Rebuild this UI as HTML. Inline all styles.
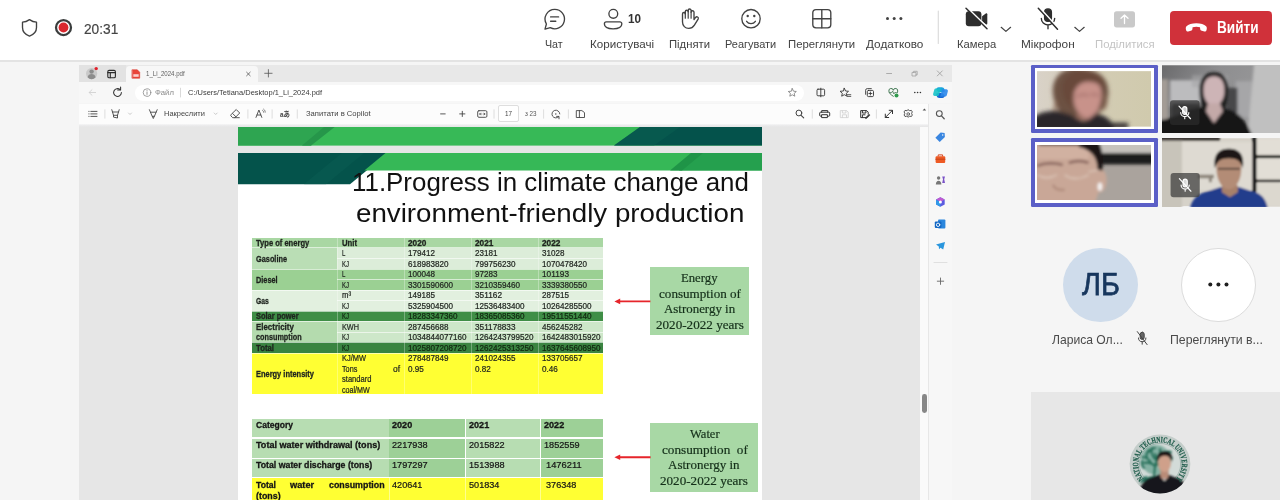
<!DOCTYPE html>
<html lang="uk"><head><meta charset="utf-8"><title>Teams meeting</title>
<style>
html,body{margin:0;padding:0}
body{width:1280px;height:500px;overflow:hidden;background:#f5f5f5;font-family:"Liberation Sans",sans-serif}
#app{position:relative;width:1280px;height:500px;overflow:hidden}
#app>div,#app>svg,#app>.t{position:absolute}
#app>svg{overflow:visible;display:block}
.t{white-space:nowrap;line-height:1;transform-origin:0 50%;display:block}
</style></head>
<body><div id="app">
<div style="left:0px;top:0px;width:1280px;height:60px;background:#fff;"></div>
<div style="left:0px;top:60px;width:1280px;height:1.5px;background:#e3e3e3;"></div>
<span class="t" style='left:83.7px;top:20.88px;font-size:15.5px;color:#444;transform:scaleX(0.884);-webkit-text-stroke:.2px #444;'>20:31</span>
<span class="t" style='left:545.3px;top:38.30px;font-size:11.7px;color:#424242;transform:scaleX(0.913);'>Чат</span>
<span class="t" style='left:590.2px;top:38.30px;font-size:11.7px;color:#424242;transform:scaleX(0.994);'>Користувачі</span>
<span class="t" style='left:668.8px;top:38.30px;font-size:11.7px;color:#424242;transform:scaleX(0.965);'>Підняти</span>
<span class="t" style='left:724.8px;top:38.30px;font-size:11.7px;color:#424242;transform:scaleX(0.938);'>Реагувати</span>
<span class="t" style='left:787.8px;top:38.30px;font-size:11.7px;color:#424242;transform:scaleX(0.970);'>Переглянути</span>
<span class="t" style='left:865.6px;top:38.30px;font-size:11.7px;color:#424242;transform:scaleX(1.006);'>Додатково</span>
<span class="t" style='left:956.8px;top:38.30px;font-size:11.7px;color:#424242;transform:scaleX(0.960);'>Камера</span>
<span class="t" style='left:1021.3px;top:38.30px;font-size:11.7px;color:#424242;transform:scaleX(1.013);'>Мікрофон</span>
<span class="t" style='left:1094.6px;top:38.30px;font-size:11.7px;color:#c4c4c4;transform:scaleX(0.971);'>Поділитися</span>
<span class="t" style='left:627.8px;top:12.96px;font-size:12.8px;font-weight:700;color:#333;transform:scaleX(0.913);'>10</span>
<div style="left:1170.3px;top:10.9px;width:101.5px;height:33.8px;background:#d0313a;border-radius:4px;"></div>
<span class="t" style='left:1216.6px;top:20.25px;font-size:16.6px;font-weight:700;color:#fff;transform:scaleX(0.820);'>Вийти</span>
<svg style="left:0;top:0" width="1280" height="60" viewBox="0 0 1280 60" fill="none" stroke="#424242" stroke-width="1.35" stroke-linecap="round" stroke-linejoin="round">
<!-- shield -->
<path d="M29.5 19.6c2.3 1.7 4.6 2.5 7 2.6v5.3c0 4.200-2.600 7-7 8.600c-4.400-1.600-7-4.400-7-8.600v-5.300c2.400-.1 4.700-.9 7-2.600z"/>
<!-- record -->
<circle cx="63.500" cy="27.500" r="7.500" stroke="#3a3d3d" stroke-width="2.250"/>
<circle cx="63.500" cy="27.500" r="4.900" fill="#d9272e" stroke="none"/>
<!-- chat -->
<path d="M554.800 9.400a9.700 9.700 0 1 1-4.500 18.300l-5.300 1.400 1.400-5.100a9.700 9.700 0 0 1 8.400-14.600z"/>
<path d="M550.600 16.900h8M550.600 21.200h5.200"/>
<!-- people -->
<circle cx="613.300" cy="13.800" r="4.400"/>
<path d="M606.300 21.800h13.600a1.900 1.900 0 0 1 1.900 1.900v.3c0 2.800-3.300 4.800-8.700 4.800s-8.700-2-8.700-4.800v-.3a1.900 1.900 0 0 1 1.900-1.900z"/>
<!-- hand -->
<g transform="translate(1379.200 0) scale(-1 1)">
<path d="M685.200 19.500v-7.300a1.450 1.450 0 0 1 2.900 0v-1.700a1.450 1.450 0 0 1 2.900 0v1.200a1.450 1.450 0 0 1 2.900 0v2.200a1.400 1.400 0 0 1 2.800 0v8.200c0 3.700-2.700 6.300-6.300 6.300c-2.600 0-4.300-1.100-5.600-3.200l-3.700-6.100c-.5-.9-.2-1.700.5-2.100c.8-.4 1.600-.1 2.200.6z"/>
<path d="M688.100 12.200v6M691 10.500v7.700M693.900 11.700v6.500" stroke-width="1.200"/>
</g>
<!-- emoji -->
<circle cx="751" cy="18.700" r="9.200"/>
<circle cx="747.700" cy="16" r="1.200" fill="#424242" stroke="none"/><circle cx="754.300" cy="16" r="1.200" fill="#424242" stroke="none"/>
<path d="M746.600 21.300c1.100 1.600 2.600 2.300 4.400 2.300s3.300-.7 4.400-2.300"/>
<!-- grid -->
<rect x="812.800" y="9.600" width="18" height="18.200" rx="3.200"/>
<path d="M821.800 9.600v18.200M812.800 18.700h18"/>
<!-- more -->
<g fill="#424242" stroke="none"><circle cx="887.500" cy="18.600" r="1.500"/><circle cx="894.200" cy="18.600" r="1.500"/><circle cx="900.900" cy="18.600" r="1.500"/></g>
<!-- divider -->
<path d="M938.300 11v32.500" stroke="#dcdcdc" stroke-width="1.200"/>
<!-- camera off -->
<g fill="#2e2e2e" stroke="none"><rect x="965.800" y="11.200" width="15.600" height="15" rx="3"/><path d="M982.100 16.300l3.700-2.900c.7-.5 1.500-.1 1.500.8v9.200c0 .9-.8 1.300-1.500.8l-3.700-2.900z"/></g>
<path d="M967.300 7.800l20.600 20.200" stroke="#fff" stroke-width="1.800"/>
<path d="M966 8.200l21 20.600" stroke="#2e2e2e" stroke-width="1.500"/>
<!-- chevrons -->
<path d="M1001.200 27.300l4.700 4.100 4.700-4.100M1074.800 27.300l4.700 4.100 4.700-4.100" stroke-width="1.200"/>
<!-- mic off -->
<rect x="1044.600" y="8.900" width="6.800" height="12.400" rx="3.400" stroke="#2e2e2e" fill="#2e2e2e"/>
<path d="M1041.300 18.300a6.700 6.700 0 0 0 13.400 0M1048 25.200v3.600" stroke="#2e2e2e"/>
<path d="M1039.700 7.900l18.600 20.400" stroke="#fff" stroke-width="1.800"/>
<path d="M1038.300 8.300l19.200 20.900" stroke="#2e2e2e" stroke-width="1.500"/>
<!-- share (disabled) -->
<rect x="1114" y="11.200" width="21" height="16.200" rx="2.600" fill="#c9c9c9" stroke="none"/>
<path d="M1124.500 23.500v-8.200M1121 18.300l3.500-3.300 3.500 3.300" stroke="#fff" stroke-width="1.300"/>
<!-- hang up phone -->
<path d="M1196.300 23.300c4.300 0 8 1.100 9.800 3 .9.900.9 2.400.4 3.900-.3.900-1.200 1.400-2.100 1.200l-2.600-.6c-.9-.2-1.500-.9-1.600-1.800l-.2-1.700c-2.400-.8-5-.8-7.400 0l-.2 1.700c-.1.900-.7 1.600-1.600 1.800l-2.600.6c-.9.200-1.800-.3-2.100-1.200-.5-1.500-.5-3 .4-3.900 1.800-1.900 5.500-3 9.800-3z" fill="#fff" stroke="none"/>
</svg>
<div style="left:0px;top:61.5px;width:1280px;height:438.5px;background:#f5f5f5;"></div>
<div style="left:78.5px;top:64.5px;width:873.5px;height:17.1px;background:#e8e8e8;"></div>
<div style="left:78.5px;top:64.5px;width:47.0px;height:17.1px;background:#e2e2e2;"></div>
<div style="left:125.5px;top:66px;width:132.1px;height:15.8px;background:#f7f7f7;border-radius:4px 4px 0 0;"></div>
<div style="left:78.5px;top:81.6px;width:873.5px;height:21.9px;background:#f7f7f7;"></div>
<div style="left:135px;top:84.6px;width:669px;height:16.0px;background:#fff;border-radius:8px;"></div>
<div style="left:78.5px;top:103.5px;width:849.5px;height:21.1px;background:#fcfcfc;"></div>
<div style="left:78.5px;top:124.6px;width:841.5px;height:375.4px;background:#e6e6e6;"></div>
<div style="left:920px;top:124.6px;width:8px;height:375.4px;background:#fafafa;"></div>
<div style="left:928px;top:103.5px;width:24px;height:396.5px;background:#f7f7f7;border-left:1px solid #e7e7e7;box-sizing:border-box;"></div>
<div style="left:78.5px;top:124.2px;width:849.5px;height:2.8px;background:linear-gradient(#f6f6f7,#ececed 45%,#e6e6e6);"></div>
<span class="t" style='left:146.3px;top:70.21px;font-size:7.2px;color:#5e5e5e;transform:scaleX(0.849);'>1_Li_2024.pdf</span>
<span class="t" style='left:155.3px;top:89.14px;font-size:7.4px;color:#8a8a8a;transform:scaleX(1.040);'>Файл</span>
<span class="t" style='left:187.6px;top:88.91px;font-size:7.9px;color:#3a3a3a;transform:scaleX(0.946);'>C:/Users/Tetiana/Desktop/1_Li_2024.pdf</span>
<span class="t" style='left:164.3px;top:110.11px;font-size:7.9px;color:#444;transform:scaleX(0.945);'>Накреслити</span>
<span class="t" style='left:306.2px;top:110.11px;font-size:7.9px;color:#444;transform:scaleX(0.968);'>Запитати в Copilot</span>
<div style="left:498.2px;top:104.8px;width:21.2px;height:17.0px;background:#fff;border:1px solid #dedede;box-sizing:border-box;border-radius:2px;"></div>
<span class="t" style='left:505.2px;top:110.64px;font-size:6.8px;color:#444;transform:scaleX(0.926);'>17</span>
<span class="t" style='left:524.6px;top:110.98px;font-size:6.4px;color:#555;transform:scaleX(0.981);'>з 23</span>
<svg style="left:0;top:60px" width="1280" height="70" viewBox="0 60 1280 70" fill="none" stroke="#4a4a4a" stroke-width="0.9" stroke-linecap="round" stroke-linejoin="round">
<!-- profile -->
<circle cx="91.600" cy="73.600" r="5.600" fill="#c9c9c9" stroke="none"/>
<circle cx="91.600" cy="71.600" r="2.200" fill="#8c8c8c" stroke="none"/>
<path d="M87.600 77.200c.5-2.200 2-3.200 4-3.200s3.500 1 4 3.200c-1 1.300-2.400 2-4 2s-3-.7-4-2z" fill="#8c8c8c" stroke="none"/>
<circle cx="96.200" cy="68.600" r="1.700" fill="#e0202b" stroke="none"/>
<!-- tab actions -->
<rect x="107.800" y="70.400" width="7.600" height="7.400" rx="1.300" stroke="#2b2b2b" stroke-width="1.100"/>
<path d="M107.800 72.600h7.600M110.300 72.600v5.200" stroke="#2b2b2b" stroke-width="1.100"/>
<!-- pdf favicon -->
<path d="M132.300 69.800h5l2.400 2.400v6h-7.400z" fill="#e9443a" stroke="#d8362c" stroke-width=".6"/>
<path d="M133.300 74.200h5.400v2.600h-5.400z" fill="#fff" stroke="none" opacity=".75"/>
<!-- tab close, new tab -->
<path d="M246.600 72.200l3.600 3.600M250.200 72.200l-3.600 3.600" stroke="#555" stroke-width=".8"/>
<path d="M268.400 69.600v7.400M264.700 73.300h7.400" stroke="#555" stroke-width=".8"/>
<!-- window controls -->
<path d="M886.600 73.500h5" stroke="#9a9a9a" stroke-width=".8"/>
<path d="M912.400 72.400h3.600v3.600h-3.600zM913.600 72.400v-1.100h3.600v3.600h-1.200" stroke="#9a9a9a" stroke-width=".7"/>
<path d="M937.300 70.900l5 5M942.300 70.900l-5 5" stroke="#9a9a9a" stroke-width=".8"/>
<!-- back (disabled) -->
<path d="M95.600 92.500h-6.400M92 89.700l-2.900 2.800 2.900 2.800" stroke="#d0d0d0"/>
<!-- reload -->
<path d="M121.400 92.600a3.900 3.900 0 1 1-1.300-3" stroke="#333" stroke-width="1.050"/>
<path d="M120.600 87v2.900h-2.900" stroke="#333" stroke-width="1.050"/>
<!-- info -->
<circle cx="147" cy="92.600" r="3.800" stroke="#8a8a8a" stroke-width=".8"/>
<path d="M147 92v2.400M147 90.600v.1" stroke="#8a8a8a" stroke-width=".9"/>
<path d="M180.500 88.200v8.800" stroke="#cfcfcf" stroke-width=".8"/>
<!-- star -->
<path d="M792.300 88.600l1.200 2.600 2.800.3-2.100 1.900.6 2.800-2.500-1.400-2.500 1.400.6-2.800-2.100-1.900 2.800-.3z" stroke="#777" stroke-width=".8"/>
<!-- split screen -->
<rect x="817" y="89.200" width="7.600" height="6.600" rx="1" stroke="#333"/><path d="M820.800 88.200v8.600" stroke="#333"/>
<!-- favourites -->
<path d="M844.300 88.300l1.300 2.700 2.900.3-2.200 2 .7 2.900-2.700-1.500-2.600 1.500.6-2.900-2.200-2 3-.3z" stroke="#333"/>
<path d="M847.400 94.700h3.400M847.400 96.400h3.400" stroke="#333" stroke-width=".8"/>
<!-- collections -->
<rect x="867.300" y="90.400" width="6.200" height="6.200" rx="1.200" stroke="#333"/>
<path d="M865.600 94.300v-4a1.700 1.700 0 0 1 1.700-1.700h4M870.400 92v3M868.900 93.500h3" stroke="#333" stroke-width=".85"/>
<!-- browser essentials -->
<path d="M893.300 96.300c-2.700-1.700-4.400-3.300-4.400-5.200a2.200 2.200 0 0 1 4.400-.8a2.200 2.200 0 0 1 4.400.8c0 .6-.2 1.200-.5 1.700" stroke="#2f6b42"/>
<path d="M889.600 92.600h2.100l.9-1.500 1.300 2.800.8-1.300h1.600" stroke="#2f6b42" stroke-width=".75"/>
<circle cx="896.500" cy="95.500" r="2" fill="#2f9a4c" stroke="none"/>
<!-- ... -->
<g fill="#333" stroke="none"><circle cx="914.800" cy="92.500" r=".8"/><circle cx="917.600" cy="92.500" r=".8"/><circle cx="920.400" cy="92.500" r=".8"/></g>
<!-- copilot -->
<path d="M938.600 87.200h3.200c1.300 0 2.200.7 2.500 1.900l.6 2.300-3.100 1-3.600-.4-2.100-2.600c.5-1.400 1.300-2.200 2.500-2.200z" fill="#1aa3dd" stroke="none"/>
<path d="M942.400 98h-3.200c-1.300 0-2.200-.7-2.500-1.900l-.6-2.300 3.100-1 3.600.4 2.100 2.600c-.5 1.400-1.300 2.200-2.500 2.200z" fill="#1768d4" stroke="none"/>
<path d="M936 88.600c-.9 0-1.500.5-1.800 1.400l-1 3.600c-.4 1.400.3 2.400 1.600 2.400h2.600c.8 0 1.300-.4 1.600-1.300l1.500-5c.1-.4.300-.8.700-1.100z" fill="#17c2c8" stroke="none" opacity=".9"/>
<path d="M945 96.600c.9 0 1.500-.5 1.800-1.400l1-3.600c.4-1.400-.3-2.400-1.600-2.400h-2.600c-.8 0-1.300.4-1.600 1.300l-1.500 5c-.1.400-.3.800-.7 1.100z" fill="#2a86ea" stroke="none" opacity=".9"/>

<!-- ===== pdf toolbar ===== -->
<path d="M88.800 111.400h.3M90.800 111.400h6.200M88.800 113.900h.3M90.800 113.900h6.200M88.800 116.400h.3M90.800 116.400h6.200" stroke="#444" stroke-width=".9"/>
<path d="M104.900 109.800v8.400M247.900 109.800v8.400M272.100 109.800v8.400M297.300 109.800v8.400M494 109.800v8.400M543.600 109.800v8.400M568.400 109.800v8.400M812.300 109.800v8.400M876.400 109.800v8.400" stroke="#d6d6d6" stroke-width=".8"/>
<!-- highlight -->
<path d="M111.800 109.700l1.700 5.600h4l1.700-5.600M113.500 115.300v1.800l4 .9v-2.700M112.400 112h6.200" stroke="#444"/>
<path d="M128.500 113l1.500 1.500 1.500-1.500M214.200 113l1.500 1.500 1.500-1.500" stroke="#bdbdbd" stroke-width=".8"/>
<!-- draw -->
<path d="M149.400 109.700l2.800 6.600h2.200l2.800-6.600M150.600 112.200h5.400M152.300 116.300l1 2.200 1-2.200" stroke="#444"/>
<!-- eraser -->
<path d="M236.500 109.800l3.200 3.200-4.600 4.700h-2.400l-1.700-1.700c-.4-.4-.4-1 0-1.400zM232.700 113.600l3.200 3.200M235 117.700h4.300" stroke="#444"/>
<!-- read aloud A -->
<path d="M256 117.400l2.900-7.400 2.900 7.400M257 115h3.800" stroke="#444"/>
<path d="M262.600 110.400c.7.500 1 1.100 1 1.800M263.700 109.200c1 .8 1.500 1.800 1.500 3" stroke="#444" stroke-width=".7"/>
<!-- fit / zoom -->
<path d="M440.600 113.900h4.600M459.700 113.900h5.200M462.300 111.300v5.200" stroke="#444"/>
<rect x="477.700" y="110.700" width="9.200" height="6.600" rx="1.200" stroke="#444"/>
<path d="M479.600 114h1.900M483.100 114h1.900M480.500 113.100l-.9.900.9.900M484.100 113.100l.9.900-.9.900" stroke="#444" stroke-width=".7"/>
<!-- rotate -->
<g transform="rotate(180 555.800 114)"><path d="M552.800 111.300a3.900 3.900 0 1 1-1 2.800" stroke="#444"/><path d="M552.600 109.200v2.400h2.400" stroke="#444"/></g><circle cx="555.800" cy="114" r=".7" fill="#444" stroke="none"/>
<!-- page view -->
<path d="M576.700 110.600h5.200l2.600 2v4.900h-7.800zM579.400 110.600v6.900" stroke="#444"/>
<!-- search -->
<circle cx="798.900" cy="113" r="2.900" stroke="#444" stroke-width="1"/><path d="M801.100 115.300l2.600 2.600" stroke="#444" stroke-width="1.100"/>
<!-- print -->
<path d="M821.700 112.200v-1.600h6v1.600M821.600 116.200h-1a.9.900 0 0 1-.9-.9v-2.200a.9.900 0 0 1 .9-.9h8.200a.9.900 0 0 1 .9.900v2.200a.9.900 0 0 1-.9.900h-1M822 114.700h5.400v2.900h-5.400z" stroke="#333" stroke-width="1"/>
<!-- save (disabled) -->
<path d="M840.700 110.600h6l1.500 1.500v5.500h-7.500zM842.400 110.600v2.400h3.500v-2.400M842.400 117.600v-2.800h4.100v2.800" stroke="#d4d4d4"/>
<!-- save as -->
<path d="M866 117.600h-5.300v-7h6l1.500 1.500v2M862.400 110.600v2.400h3.500v-2.400M862.400 117.600v-2.800h2.600" stroke="#333" stroke-width="1"/>
<path d="M868.900 114.400l-3 3-.4 1.200 1.300-.3 3-3z" fill="#333" stroke="#333" stroke-width=".6"/>
<!-- expand -->
<path d="M885.400 117.400l7-7M889.200 110.300h3.300v3.300M885.300 114.100v3.400h3.400" stroke="#333" stroke-width="1"/>
<!-- gear -->
<path d="M908.200 109.800l1.500.9 1.700-.3.900 1.500-.7 1.500.7 1.600-.9 1.500-1.700-.3-1.500.9-1.500-.9-1.700.3-.9-1.500.7-1.600-.7-1.500.9-1.500 1.700.3z" stroke="#444"/><circle cx="908.200" cy="114" r="1.300" stroke="#444" stroke-width=".8"/>
<path d="M922.600 110.600l1.800-2 1.800 2z" fill="#555" stroke="none"/>
</svg>
<span class="t" style='left:280px;top:110.57px;font-size:7.6px;font-weight:700;color:#444;transform:scaleX(0.845);font-family:"Liberation Sans","Noto Sans CJK JP",sans-serif;'>aあ</span>
<svg style="left:928px;top:104px" width="24" height="200" viewBox="928 104 24 200" fill="none" stroke-linecap="round" stroke-linejoin="round">
<circle cx="939.300" cy="113.600" r="2.900" stroke="#555" stroke-width="1.100"/><path d="M941.500 115.900l2.700 2.800" stroke="#555" stroke-width="1.300"/>
<path d="M940.600 132.600l4 .3.300 4-5.200 5.200-4.300-4.300z" fill="#3a86e0"/><circle cx="942.700" cy="135" r=".7" fill="#fff"/>
<path d="M938.200 156.200v-1.300h4.400v1.300" stroke="#d4471f" stroke-width="1"/><rect x="935.600" y="156.200" width="9.600" height="6.800" rx="1" fill="#ee5a24"/><path d="M935.600 159.200h9.600" stroke="#b63a12" stroke-width=".7"/>
<circle cx="938.600" cy="178" r="1.700" fill="#777"/><path d="M935.800 184.600c.2-2.600 1.200-3.800 2.800-3.800s2.600 1.200 2.800 3.800z" fill="#777"/>
<path d="M942.200 176.600h2.800l-.8 2.600.8 3.800h-2.800l.8-3.800z" fill="#7a52c7"/>
<path d="M940.400 197.200l4.300 2.400v4.800l-4.300 2.400-4.300-2.400v-4.800z" fill="#5b5be0"/><path d="M940.400 197.200l4.300 2.400-4.300 2.400-4.300-2.400z" fill="#c05ad0"/><path d="M940.400 202v4.800l-4.300-2.400v-4.800z" fill="#2f9be8"/><circle cx="940.400" cy="202" r="1.500" fill="#fff"/>
<rect x="938" y="219.600" width="7.400" height="9" rx="1" fill="#2a86dd"/><rect x="934.800" y="221.600" width="6.600" height="6.400" rx="1" fill="#1267c4"/><circle cx="938.100" cy="224.800" r="1.700" stroke="#fff" stroke-width=".9"/>
<path d="M936 244.600l9-2.600-1.800 7.600-2.700-1.900-1.500 1.500-.2-2.600z" fill="#2a96dd"/>
<path d="M934 262.500h13" stroke="#dcdcdc" stroke-width=".9"/>
<path d="M940.500 278v6.400M937.300 281.200h6.400" stroke="#666" stroke-width=".9"/>
</svg>
<div style="left:922px;top:394.4px;width:4.8px;height:18.4px;background:#878787;border-radius:2.4px;"></div>
<svg style="left:238px;top:126.7px" width="524" height="18.6" viewBox="0 0 524 20.4" preserveAspectRatio="none">
<rect width="524" height="20.4" fill="#37b957"/>
<path d="M0 0h96.500l-23.500 20.400h-73z" fill="#2ea551"/>
<path d="M86 0h10.500l-23.500 20.400h-9z" fill="#26964a"/>
<path d="M402 0h122v20.400h-148z" fill="#04524b"/>
<path d="M402 0h40l-26 20.400h-40z" fill="#0a5f52" opacity=".5"/>
</svg>
<div style="left:238px;top:153.2px;width:524px;height:346.8px;background:#fff;"></div>
<svg style="left:238px;top:153.200px" width="524" height="32" viewBox="0 0 524 32" preserveAspectRatio="none">
<path d="M0 0h150l-38 31.200h-112z" fill="#04534b"/>
<path d="M104 0h22l-38 31.200h-22z" fill="#0a5f54" opacity=".45"/>
<path d="M147.500 0h376.500v17.400h-397.700z" fill="#36b857"/>
<path d="M462 0h62v17.400h-83z" fill="#25a04e"/>
<path d="M453 0h12l-21 17.400h-12z" fill="#1f9447"/>
</svg>
<span class="t" style='left:351.9px;top:169.50px;font-size:25.4px;color:#111;transform:scaleX(1.020);'>11.Progress in climate change and</span>
<span class="t" style='left:355.9px;top:200.50px;font-size:25.4px;color:#111;transform:scaleX(1.092);'>environment-friendly production</span>
<div style="left:251.8px;top:238.2px;width:351.6px;height:156.0px;background:#fff;"></div>
<div style="left:251.8px;top:238.2px;width:85.4px;height:9.6px;background:#a9d7a3;"></div>
<div style="left:337.2px;top:238.2px;width:67.4px;height:9.6px;background:#a9d7a3;"></div>
<div style="left:404.6px;top:238.2px;width:66.6px;height:9.6px;background:#a9d7a3;"></div>
<div style="left:471.2px;top:238.2px;width:66.8px;height:9.6px;background:#a9d7a3;"></div>
<div style="left:538px;top:238.2px;width:65.4px;height:9.6px;background:#a9d7a3;"></div>
<div style="left:251.8px;top:247.8px;width:85.4px;height:10.6px;background:#badeb5;"></div>
<div style="left:337.2px;top:247.8px;width:67.4px;height:10.6px;background:#dcedd9;"></div>
<div style="left:404.6px;top:247.8px;width:66.6px;height:10.6px;background:#dcedd9;"></div>
<div style="left:471.2px;top:247.8px;width:66.8px;height:10.6px;background:#dcedd9;"></div>
<div style="left:538px;top:247.8px;width:65.4px;height:10.6px;background:#dcedd9;"></div>
<div style="left:251.8px;top:258.4px;width:85.4px;height:10.5px;background:#badeb5;"></div>
<div style="left:337.2px;top:258.4px;width:67.4px;height:10.5px;background:#dcedd9;"></div>
<div style="left:404.6px;top:258.4px;width:66.6px;height:10.5px;background:#dcedd9;"></div>
<div style="left:471.2px;top:258.4px;width:66.8px;height:10.5px;background:#dcedd9;"></div>
<div style="left:538px;top:258.4px;width:65.4px;height:10.5px;background:#dcedd9;"></div>
<div style="left:251.8px;top:268.9px;width:85.4px;height:10.5px;background:#9bd093;"></div>
<div style="left:337.2px;top:268.9px;width:67.4px;height:10.5px;background:#9bd093;"></div>
<div style="left:404.6px;top:268.9px;width:66.6px;height:10.5px;background:#9bd093;"></div>
<div style="left:471.2px;top:268.9px;width:66.8px;height:10.5px;background:#9bd093;"></div>
<div style="left:538px;top:268.9px;width:65.4px;height:10.5px;background:#9bd093;"></div>
<div style="left:251.8px;top:279.4px;width:85.4px;height:10.5px;background:#9bd093;"></div>
<div style="left:337.2px;top:279.4px;width:67.4px;height:10.5px;background:#9bd093;"></div>
<div style="left:404.6px;top:279.4px;width:66.6px;height:10.5px;background:#9bd093;"></div>
<div style="left:471.2px;top:279.4px;width:66.8px;height:10.5px;background:#9bd093;"></div>
<div style="left:538px;top:279.4px;width:65.4px;height:10.5px;background:#9bd093;"></div>
<div style="left:251.8px;top:289.9px;width:85.4px;height:10.5px;background:#e2f0df;"></div>
<div style="left:337.2px;top:289.9px;width:67.4px;height:10.5px;background:#e2f0df;"></div>
<div style="left:404.6px;top:289.9px;width:66.6px;height:10.5px;background:#e2f0df;"></div>
<div style="left:471.2px;top:289.9px;width:66.8px;height:10.5px;background:#e2f0df;"></div>
<div style="left:538px;top:289.9px;width:65.4px;height:10.5px;background:#e2f0df;"></div>
<div style="left:251.8px;top:300.4px;width:85.4px;height:10.5px;background:#e2f0df;"></div>
<div style="left:337.2px;top:300.4px;width:67.4px;height:10.5px;background:#e2f0df;"></div>
<div style="left:404.6px;top:300.4px;width:66.6px;height:10.5px;background:#e2f0df;"></div>
<div style="left:471.2px;top:300.4px;width:66.8px;height:10.5px;background:#e2f0df;"></div>
<div style="left:538px;top:300.4px;width:65.4px;height:10.5px;background:#e2f0df;"></div>
<div style="left:251.8px;top:310.9px;width:85.4px;height:10.5px;background:#3f8e46;"></div>
<div style="left:337.2px;top:310.9px;width:67.4px;height:10.5px;background:#3f8e46;"></div>
<div style="left:404.6px;top:310.9px;width:66.6px;height:10.5px;background:#3f8e46;"></div>
<div style="left:471.2px;top:310.9px;width:66.8px;height:10.5px;background:#3f8e46;"></div>
<div style="left:538px;top:310.9px;width:65.4px;height:10.5px;background:#3f8e46;"></div>
<div style="left:251.8px;top:321.4px;width:85.4px;height:10.5px;background:#b4dbae;"></div>
<div style="left:337.2px;top:321.4px;width:67.4px;height:10.5px;background:#cde7c9;"></div>
<div style="left:404.6px;top:321.4px;width:66.6px;height:10.5px;background:#cde7c9;"></div>
<div style="left:471.2px;top:321.4px;width:66.8px;height:10.5px;background:#cde7c9;"></div>
<div style="left:538px;top:321.4px;width:65.4px;height:10.5px;background:#cde7c9;"></div>
<div style="left:251.8px;top:331.9px;width:85.4px;height:10.5px;background:#b4dbae;"></div>
<div style="left:337.2px;top:331.9px;width:67.4px;height:10.5px;background:#cde7c9;"></div>
<div style="left:404.6px;top:331.9px;width:66.6px;height:10.5px;background:#cde7c9;"></div>
<div style="left:471.2px;top:331.9px;width:66.8px;height:10.5px;background:#cde7c9;"></div>
<div style="left:538px;top:331.9px;width:65.4px;height:10.5px;background:#cde7c9;"></div>
<div style="left:251.8px;top:342.4px;width:85.4px;height:10.5px;background:#3a8441;"></div>
<div style="left:337.2px;top:342.4px;width:67.4px;height:10.5px;background:#3a8441;"></div>
<div style="left:404.6px;top:342.4px;width:66.6px;height:10.5px;background:#3a8441;"></div>
<div style="left:471.2px;top:342.4px;width:66.8px;height:10.5px;background:#3a8441;"></div>
<div style="left:538px;top:342.4px;width:65.4px;height:10.5px;background:#3a8441;"></div>
<div style="left:251.8px;top:352.9px;width:85.4px;height:10.5px;background:#ffff33;"></div>
<div style="left:337.2px;top:352.9px;width:67.4px;height:10.5px;background:#ffff33;"></div>
<div style="left:404.6px;top:352.9px;width:66.6px;height:10.5px;background:#ffff33;"></div>
<div style="left:471.2px;top:352.9px;width:66.8px;height:10.5px;background:#ffff33;"></div>
<div style="left:538px;top:352.9px;width:65.4px;height:10.5px;background:#ffff33;"></div>
<div style="left:251.8px;top:363.4px;width:85.4px;height:30.8px;background:#ffff33;"></div>
<div style="left:337.2px;top:363.4px;width:67.4px;height:30.8px;background:#ffff33;"></div>
<div style="left:404.6px;top:363.4px;width:66.6px;height:30.8px;background:#ffff33;"></div>
<div style="left:471.2px;top:363.4px;width:66.8px;height:30.8px;background:#ffff33;"></div>
<div style="left:538px;top:363.4px;width:65.4px;height:30.8px;background:#ffff33;"></div>
<div style="left:251.8px;top:247.4px;width:351.6px;height:0.8px;background:rgba(255,255,255,.6);"></div>
<div style="left:337.2px;top:258.0px;width:266.2px;height:0.8px;background:rgba(255,255,255,.6);"></div>
<div style="left:251.8px;top:268.5px;width:351.6px;height:0.8px;background:rgba(255,255,255,.6);"></div>
<div style="left:337.2px;top:279.0px;width:266.2px;height:0.8px;background:rgba(255,255,255,.6);"></div>
<div style="left:251.8px;top:289.5px;width:351.6px;height:0.8px;background:rgba(255,255,255,.6);"></div>
<div style="left:337.2px;top:300.0px;width:266.2px;height:0.8px;background:rgba(255,255,255,.6);"></div>
<div style="left:251.8px;top:310.5px;width:351.6px;height:0.8px;background:rgba(255,255,255,.6);"></div>
<div style="left:251.8px;top:321.0px;width:351.6px;height:0.8px;background:rgba(255,255,255,.6);"></div>
<div style="left:337.2px;top:331.5px;width:266.2px;height:0.8px;background:rgba(255,255,255,.6);"></div>
<div style="left:251.8px;top:342.0px;width:351.6px;height:0.8px;background:rgba(255,255,255,.6);"></div>
<div style="left:251.8px;top:352.5px;width:351.6px;height:0.8px;background:rgba(255,255,255,.6);"></div>
<div style="left:336.8px;top:238.2px;width:0.8px;height:156.0px;background:rgba(255,255,255,.3);"></div>
<div style="left:404.20000000000005px;top:238.2px;width:0.8px;height:156.0px;background:rgba(255,255,255,.3);"></div>
<div style="left:470.8px;top:238.2px;width:0.8px;height:156.0px;background:rgba(255,255,255,.3);"></div>
<div style="left:537.6px;top:238.2px;width:0.8px;height:156.0px;background:rgba(255,255,255,.3);"></div>
<span class="t" style='left:255.5px;top:239.04px;font-size:8.7px;font-weight:700;color:#1e231e;transform:scaleX(0.870);-webkit-text-stroke:0.3px #1e231e;'>Type of energy</span>
<span class="t" style='left:341.8px;top:239.04px;font-size:8.7px;font-weight:700;color:#1e231e;transform:scaleX(0.888);-webkit-text-stroke:0.3px #1e231e;'>Unit</span>
<span class="t" style='left:408.3px;top:239.04px;font-size:8.7px;font-weight:700;color:#1e231e;transform:scaleX(0.952);-webkit-text-stroke:0.3px #1e231e;'>2020</span>
<span class="t" style='left:474.9px;top:239.04px;font-size:8.7px;font-weight:700;color:#1e231e;transform:scaleX(0.952);-webkit-text-stroke:0.3px #1e231e;'>2021</span>
<span class="t" style='left:541.7px;top:239.04px;font-size:8.7px;font-weight:700;color:#1e231e;transform:scaleX(0.952);-webkit-text-stroke:0.3px #1e231e;'>2022</span>
<span class="t" style='left:255.5px;top:254.54px;font-size:8.7px;font-weight:700;color:#1e231e;transform:scaleX(0.845);-webkit-text-stroke:0.3px #1e231e;'>Gasoline</span>
<span class="t" style='left:255.5px;top:275.64px;font-size:8.7px;font-weight:700;color:#1e231e;transform:scaleX(0.843);-webkit-text-stroke:0.3px #1e231e;'>Diesel</span>
<span class="t" style='left:255.5px;top:296.64px;font-size:8.7px;font-weight:700;color:#1e231e;transform:scaleX(0.779);-webkit-text-stroke:0.3px #1e231e;'>Gas</span>
<span class="t" style='left:255.5px;top:312.44px;font-size:8.7px;font-weight:700;color:#1e231e;transform:scaleX(0.857);-webkit-text-stroke:0.3px #1e231e;'>Solar power</span>
<span class="t" style='left:255.5px;top:322.94px;font-size:8.7px;font-weight:700;color:#1e231e;transform:scaleX(0.910);-webkit-text-stroke:0.3px #1e231e;'>Electricity</span>
<span class="t" style='left:255.5px;top:333.44px;font-size:8.7px;font-weight:700;color:#1e231e;transform:scaleX(0.836);-webkit-text-stroke:0.3px #1e231e;'>consumption</span>
<span class="t" style='left:255.5px;top:343.94px;font-size:8.7px;font-weight:700;color:#1e231e;transform:scaleX(0.895);-webkit-text-stroke:0.3px #1e231e;'>Total</span>
<span class="t" style='left:255.5px;top:369.94px;font-size:8.7px;font-weight:700;color:#1e231e;transform:scaleX(0.858);-webkit-text-stroke:0.3px #1e231e;'>Energy intensity</span>
<span class="t" style='left:341.8px;top:249.34px;font-size:8.7px;color:#1e231e;transform:scaleX(0.702);-webkit-text-stroke:0.22px #1e231e;'>L</span>
<span class="t" style='left:408.3px;top:249.34px;font-size:8.7px;color:#1e231e;transform:scaleX(0.931);-webkit-text-stroke:0.22px #1e231e;'>179412</span>
<span class="t" style='left:474.9px;top:249.34px;font-size:8.7px;color:#1e231e;transform:scaleX(0.931);-webkit-text-stroke:0.22px #1e231e;'>23181</span>
<span class="t" style='left:541.7px;top:249.34px;font-size:8.7px;color:#1e231e;transform:scaleX(0.931);-webkit-text-stroke:0.22px #1e231e;'>31028</span>
<span class="t" style='left:341.8px;top:259.94px;font-size:8.7px;color:#1e231e;transform:scaleX(0.690);-webkit-text-stroke:0.22px #1e231e;'>KJ</span>
<span class="t" style='left:408.3px;top:259.94px;font-size:8.7px;color:#1e231e;transform:scaleX(0.931);-webkit-text-stroke:0.22px #1e231e;'>618983820</span>
<span class="t" style='left:474.9px;top:259.94px;font-size:8.7px;color:#1e231e;transform:scaleX(0.931);-webkit-text-stroke:0.22px #1e231e;'>799756230</span>
<span class="t" style='left:541.7px;top:259.94px;font-size:8.7px;color:#1e231e;transform:scaleX(0.931);-webkit-text-stroke:0.22px #1e231e;'>1070478420</span>
<span class="t" style='left:341.8px;top:270.44px;font-size:8.7px;color:#1e231e;transform:scaleX(0.702);-webkit-text-stroke:0.22px #1e231e;'>L</span>
<span class="t" style='left:408.3px;top:270.44px;font-size:8.7px;color:#1e231e;transform:scaleX(0.931);-webkit-text-stroke:0.22px #1e231e;'>100048</span>
<span class="t" style='left:474.9px;top:270.44px;font-size:8.7px;color:#1e231e;transform:scaleX(0.931);-webkit-text-stroke:0.22px #1e231e;'>97283</span>
<span class="t" style='left:541.7px;top:270.44px;font-size:8.7px;color:#1e231e;transform:scaleX(0.953);-webkit-text-stroke:0.22px #1e231e;'>101193</span>
<span class="t" style='left:341.8px;top:280.94px;font-size:8.7px;color:#1e231e;transform:scaleX(0.690);-webkit-text-stroke:0.22px #1e231e;'>KJ</span>
<span class="t" style='left:408.3px;top:280.94px;font-size:8.7px;color:#1e231e;transform:scaleX(0.931);-webkit-text-stroke:0.22px #1e231e;'>3301590600</span>
<span class="t" style='left:474.9px;top:280.94px;font-size:8.7px;color:#1e231e;transform:scaleX(0.931);-webkit-text-stroke:0.22px #1e231e;'>3210359460</span>
<span class="t" style='left:541.7px;top:280.94px;font-size:8.7px;color:#1e231e;transform:scaleX(0.931);-webkit-text-stroke:0.22px #1e231e;'>3339380550</span>
<span class="t" style='left:341.8px;top:291.44px;font-size:8.7px;color:#1e231e;transform:scaleX(0.888);-webkit-text-stroke:0.22px #1e231e;'>m³</span>
<span class="t" style='left:408.3px;top:291.44px;font-size:8.7px;color:#1e231e;transform:scaleX(0.931);-webkit-text-stroke:0.22px #1e231e;'>149185</span>
<span class="t" style='left:474.9px;top:291.44px;font-size:8.7px;color:#1e231e;transform:scaleX(0.953);-webkit-text-stroke:0.22px #1e231e;'>351162</span>
<span class="t" style='left:541.7px;top:291.44px;font-size:8.7px;color:#1e231e;transform:scaleX(0.931);-webkit-text-stroke:0.22px #1e231e;'>287515</span>
<span class="t" style='left:341.8px;top:301.94px;font-size:8.7px;color:#1e231e;transform:scaleX(0.690);-webkit-text-stroke:0.22px #1e231e;'>KJ</span>
<span class="t" style='left:408.3px;top:301.94px;font-size:8.7px;color:#1e231e;transform:scaleX(0.931);-webkit-text-stroke:0.22px #1e231e;'>5325904500</span>
<span class="t" style='left:474.9px;top:301.94px;font-size:8.7px;color:#1e231e;transform:scaleX(0.931);-webkit-text-stroke:0.22px #1e231e;'>12536483400</span>
<span class="t" style='left:541.7px;top:301.94px;font-size:8.7px;color:#1e231e;transform:scaleX(0.931);-webkit-text-stroke:0.22px #1e231e;'>10264285500</span>
<span class="t" style='left:341.8px;top:312.44px;font-size:8.7px;color:#10260f;transform:scaleX(0.690);-webkit-text-stroke:0.22px #10260f;'>KJ</span>
<span class="t" style='left:408.3px;top:312.44px;font-size:8.7px;color:#10260f;transform:scaleX(0.931);-webkit-text-stroke:0.22px #10260f;'>18283347360</span>
<span class="t" style='left:474.9px;top:312.44px;font-size:8.7px;color:#10260f;transform:scaleX(0.931);-webkit-text-stroke:0.22px #10260f;'>18365085360</span>
<span class="t" style='left:541.7px;top:312.44px;font-size:8.7px;color:#10260f;transform:scaleX(0.943);-webkit-text-stroke:0.22px #10260f;'>19511551440</span>
<span class="t" style='left:341.8px;top:322.94px;font-size:8.7px;color:#1e231e;transform:scaleX(0.838);-webkit-text-stroke:0.22px #1e231e;'>KWH</span>
<span class="t" style='left:408.3px;top:322.94px;font-size:8.7px;color:#1e231e;transform:scaleX(0.931);-webkit-text-stroke:0.22px #1e231e;'>287456688</span>
<span class="t" style='left:474.9px;top:322.94px;font-size:8.7px;color:#1e231e;transform:scaleX(0.945);-webkit-text-stroke:0.22px #1e231e;'>351178833</span>
<span class="t" style='left:541.7px;top:322.94px;font-size:8.7px;color:#1e231e;transform:scaleX(0.931);-webkit-text-stroke:0.22px #1e231e;'>456245282</span>
<span class="t" style='left:341.8px;top:333.44px;font-size:8.7px;color:#1e231e;transform:scaleX(0.690);-webkit-text-stroke:0.22px #1e231e;'>KJ</span>
<span class="t" style='left:408.3px;top:333.44px;font-size:8.7px;color:#1e231e;transform:scaleX(0.931);-webkit-text-stroke:0.22px #1e231e;'>1034844077160</span>
<span class="t" style='left:474.9px;top:333.44px;font-size:8.7px;color:#1e231e;transform:scaleX(0.931);-webkit-text-stroke:0.22px #1e231e;'>1264243799520</span>
<span class="t" style='left:541.7px;top:333.44px;font-size:8.7px;color:#1e231e;transform:scaleX(0.931);-webkit-text-stroke:0.22px #1e231e;'>1642483015920</span>
<span class="t" style='left:341.8px;top:343.94px;font-size:8.7px;color:#10260f;transform:scaleX(0.690);-webkit-text-stroke:0.22px #10260f;'>KJ</span>
<span class="t" style='left:408.3px;top:343.94px;font-size:8.7px;color:#10260f;transform:scaleX(0.931);-webkit-text-stroke:0.22px #10260f;'>1025807208720</span>
<span class="t" style='left:474.9px;top:343.94px;font-size:8.7px;color:#10260f;transform:scaleX(0.931);-webkit-text-stroke:0.22px #10260f;'>1262425313250</span>
<span class="t" style='left:541.7px;top:343.94px;font-size:8.7px;color:#10260f;transform:scaleX(0.931);-webkit-text-stroke:0.22px #10260f;'>1637645608950</span>
<span class="t" style='left:341.8px;top:354.44px;font-size:8.7px;color:#1e231e;transform:scaleX(0.857);-webkit-text-stroke:0.22px #1e231e;'>KJ/MW</span>
<span class="t" style='left:408.3px;top:354.44px;font-size:8.7px;color:#1e231e;transform:scaleX(0.931);-webkit-text-stroke:0.22px #1e231e;'>278487849</span>
<span class="t" style='left:474.9px;top:354.44px;font-size:8.7px;color:#1e231e;transform:scaleX(0.931);-webkit-text-stroke:0.22px #1e231e;'>241024355</span>
<span class="t" style='left:541.7px;top:354.44px;font-size:8.7px;color:#1e231e;transform:scaleX(0.931);-webkit-text-stroke:0.22px #1e231e;'>133705657</span>
<span class="t" style='left:341.9px;top:364.94px;font-size:8.7px;color:#1e231e;transform:scaleX(0.833);-webkit-text-stroke:.22px #1e231e;'>Tons</span>
<span class="t" style='left:392.6px;top:364.94px;font-size:8.7px;color:#1e231e;transform:scaleX(0.966);-webkit-text-stroke:.22px #1e231e;'>of</span>
<span class="t" style='left:341.9px;top:375.44px;font-size:8.7px;color:#1e231e;transform:scaleX(0.872);-webkit-text-stroke:.22px #1e231e;'>standard</span>
<span class="t" style='left:341.9px;top:385.94px;font-size:8.7px;color:#1e231e;transform:scaleX(0.820);-webkit-text-stroke:.22px #1e231e;'>coal/MW</span>
<span class="t" style='left:408.3px;top:364.94px;font-size:8.7px;color:#1e231e;transform:scaleX(0.934);-webkit-text-stroke:0.22px #1e231e;'>0.95</span>
<span class="t" style='left:474.9px;top:364.94px;font-size:8.7px;color:#1e231e;transform:scaleX(0.934);-webkit-text-stroke:0.22px #1e231e;'>0.82</span>
<span class="t" style='left:541.7px;top:364.94px;font-size:8.7px;color:#1e231e;transform:scaleX(0.934);-webkit-text-stroke:0.22px #1e231e;'>0.46</span>
<div style="left:252.2px;top:419.2px;width:351.2px;height:80.8px;background:#fff;"></div>
<div style="left:252.2px;top:419.2px;width:136.4px;height:17.5px;background:#b7ddb2;"></div>
<div style="left:389.1px;top:419.2px;width:76.1px;height:17.5px;background:#9dd097;"></div>
<div style="left:465.7px;top:419.2px;width:74.5px;height:17.5px;background:#b7ddb2;"></div>
<div style="left:540.7px;top:419.2px;width:62.7px;height:17.5px;background:#9dd097;"></div>
<div style="left:252.2px;top:438.6px;width:136.4px;height:19.1px;background:#b7ddb2;"></div>
<div style="left:389.1px;top:438.6px;width:76.1px;height:19.1px;background:#9dd097;"></div>
<div style="left:465.7px;top:438.6px;width:74.5px;height:19.1px;background:#b7ddb2;"></div>
<div style="left:540.7px;top:438.6px;width:62.7px;height:19.1px;background:#9dd097;"></div>
<div style="left:252.2px;top:458.5px;width:136.4px;height:18.5px;background:#b7ddb2;"></div>
<div style="left:389.1px;top:458.5px;width:76.1px;height:18.5px;background:#9dd097;"></div>
<div style="left:465.7px;top:458.5px;width:74.5px;height:18.5px;background:#b7ddb2;"></div>
<div style="left:540.7px;top:458.5px;width:62.7px;height:18.5px;background:#9dd097;"></div>
<div style="left:252.2px;top:477.5px;width:351.2px;height:22.5px;background:#ffff33;"></div>
<div style="left:388.5px;top:477.5px;width:0.8px;height:22.5px;background:rgba(255,255,255,.45);"></div>
<div style="left:465.09999999999997px;top:477.5px;width:0.8px;height:22.5px;background:rgba(255,255,255,.45);"></div>
<div style="left:540.1px;top:477.5px;width:0.8px;height:22.5px;background:rgba(255,255,255,.45);"></div>
<span class="t" style='left:256.0px;top:419.94px;font-size:9.4px;font-weight:700;color:#151515;transform:scaleX(0.910);-webkit-text-stroke:0.3px #151515;'>Category</span>
<span class="t" style='left:392.40000000000003px;top:419.94px;font-size:9.4px;font-weight:700;color:#151515;transform:scaleX(0.968);-webkit-text-stroke:0.3px #151515;'>2020</span>
<span class="t" style='left:469.0px;top:419.94px;font-size:9.4px;font-weight:700;color:#151515;transform:scaleX(0.968);-webkit-text-stroke:0.3px #151515;'>2021</span>
<span class="t" style='left:544.0px;top:419.94px;font-size:9.4px;font-weight:700;color:#151515;transform:scaleX(0.968);-webkit-text-stroke:0.3px #151515;'>2022</span>
<span class="t" style='left:256.0px;top:439.84px;font-size:9.4px;font-weight:700;color:#151515;transform:scaleX(0.967);-webkit-text-stroke:0.3px #151515;'>Total water withdrawal (tons)</span>
<span class="t" style='left:392.40000000000003px;top:439.84px;font-size:9.4px;color:#151515;transform:scaleX(0.975);-webkit-text-stroke:0.22px #151515;'>2217938</span>
<span class="t" style='left:469.0px;top:439.84px;font-size:9.4px;color:#151515;transform:scaleX(0.975);-webkit-text-stroke:0.22px #151515;'>2015822</span>
<span class="t" style='left:544.0px;top:439.84px;font-size:9.4px;color:#151515;transform:scaleX(0.975);-webkit-text-stroke:0.22px #151515;'>1852559</span>
<span class="t" style='left:256.0px;top:459.84px;font-size:9.4px;font-weight:700;color:#151515;transform:scaleX(0.935);-webkit-text-stroke:0.3px #151515;'>Total water discharge (tons)</span>
<span class="t" style='left:392.40000000000003px;top:459.84px;font-size:9.4px;color:#151515;transform:scaleX(0.975);-webkit-text-stroke:0.22px #151515;'>1797297</span>
<span class="t" style='left:469.0px;top:459.84px;font-size:9.4px;color:#151515;transform:scaleX(0.975);-webkit-text-stroke:0.22px #151515;'>1513988</span>
<span class="t" style='left:546.4px;top:459.84px;font-size:9.4px;color:#151515;transform:scaleX(0.994);-webkit-text-stroke:0.22px #151515;'>1476211</span>
<span class="t" style='left:256.0px;top:480.04px;font-size:9.4px;font-weight:700;color:#151515;transform:scaleX(0.922);-webkit-text-stroke:0.3px #151515;'>Total</span>
<span class="t" style='left:290.4px;top:480.04px;font-size:9.4px;font-weight:700;color:#151515;transform:scaleX(0.988);-webkit-text-stroke:.3px #151515;'>water</span>
<span class="t" style='left:328.8px;top:480.04px;font-size:9.4px;font-weight:700;color:#151515;transform:scaleX(0.945);-webkit-text-stroke:.3px #151515;'>consumption</span>
<span class="t" style='left:256.0px;top:491.24px;font-size:9.4px;font-weight:700;color:#151515;transform:scaleX(0.944);-webkit-text-stroke:0.3px #151515;'>(tons)</span>
<span class="t" style='left:392.40000000000003px;top:480.04px;font-size:9.4px;color:#151515;transform:scaleX(0.971);-webkit-text-stroke:0.22px #151515;'>420641</span>
<span class="t" style='left:469.0px;top:480.04px;font-size:9.4px;color:#151515;transform:scaleX(0.971);-webkit-text-stroke:0.22px #151515;'>501834</span>
<span class="t" style='left:546.4px;top:480.04px;font-size:9.4px;color:#151515;transform:scaleX(0.971);-webkit-text-stroke:0.22px #151515;'>376348</span>
<div style="left:650.2px;top:266.8px;width:98.8px;height:68.4px;background:#a8d8a5;"></div>
<div style="left:650.4px;top:423px;width:108.0px;height:68.8px;background:#a8d8a5;"></div>
<span class="t" style='left:681.4px;top:271.43px;font-size:13.1px;color:#15301a;font-family:"Liberation Serif", serif;transform:scaleX(0.971);-webkit-text-stroke:.2px #15301a;'>Energy</span>
<span class="t" style='left:658.5px;top:286.83px;font-size:13.1px;color:#15301a;font-family:"Liberation Serif", serif;transform:scaleX(1.002);-webkit-text-stroke:.2px #15301a;'>consumption of</span>
<span class="t" style='left:663.9px;top:302.43px;font-size:13.1px;color:#15301a;font-family:"Liberation Serif", serif;transform:scaleX(0.986);-webkit-text-stroke:.2px #15301a;'>Astronergy in</span>
<span class="t" style='left:655.8px;top:317.83px;font-size:13.1px;color:#15301a;font-family:"Liberation Serif", serif;transform:scaleX(1.002);-webkit-text-stroke:.2px #15301a;'>2020-2022 years</span>
<span class="t" style='left:689.6px;top:426.93px;font-size:13.1px;color:#15301a;font-family:"Liberation Serif", serif;transform:scaleX(0.957);-webkit-text-stroke:.2px #15301a;'>Water</span>
<span class="t" style='left:661.7px;top:442.63px;font-size:13.1px;color:#15301a;font-family:"Liberation Serif", serif;transform:scaleX(1.009);white-space:pre;-webkit-text-stroke:.2px #15301a;'>consumption  of</span>
<span class="t" style='left:668.4px;top:458.33px;font-size:13.1px;color:#15301a;font-family:"Liberation Serif", serif;transform:scaleX(0.993);-webkit-text-stroke:.2px #15301a;'>Astronergy in</span>
<span class="t" style='left:660.3px;top:473.73px;font-size:13.1px;color:#15301a;font-family:"Liberation Serif", serif;transform:scaleX(1.002);-webkit-text-stroke:.2px #15301a;'>2020-2022 years</span>
<svg style="left:610px;top:290px" width="45" height="180" viewBox="610 290 45 180">
<path d="M618 301.400h32.400M618 457.300h32.600" stroke="#e6252b" stroke-width="1.900" fill="none"/>
<path d="M614.400 301.400l5.800-2.800v5.600zM614.400 457.300l5.800-2.800v5.600z" fill="#e6252b"/></svg>
<div style="left:1031.2px;top:64.6px;width:126.6px;height:68.4px;background:#5b5fc7;border-radius:1.2px;"></div>
<div style="left:1035.0px;top:68.39999999999999px;width:119.0px;height:60.8px;background:#fff;"></div>
<div style="left:1031.2px;top:138.2px;width:126.6px;height:68.4px;background:#5b5fc7;border-radius:1.2px;"></div>
<div style="left:1035.0px;top:142.0px;width:119.0px;height:60.8px;background:#fff;"></div>
<svg style="left:1037.300px;top:71.100px;overflow:hidden" width="114" height="55.800" viewBox="0 0 115 56">
<defs><filter id="b1" x="-20%" y="-20%" width="140%" height="140%"><feGaussianBlur stdDeviation="1.900"/></filter>
<linearGradient id="g1" x1="0" x2="1"><stop offset="0" stop-color="#d9d2c8"/><stop offset=".5" stop-color="#d3ccb4"/><stop offset="1" stop-color="#d0caad"/></linearGradient></defs>
<rect width="115" height="56" fill="url(#g1)"/>
<g filter="url(#b1)">
<path d="M74 52h18v6h-18z" fill="#3a3634"/>
<path d="M16 22c-1-16 10-26 26-25c18 1 30 8 30 24c0 8-2 14-7 18c-2 3-6 8-10 10h-22c-9-5-16-13-17-27z" fill="#6c5142"/>
<path d="M20 30c-3 6-3 12 0 16M68 24c3 6 2 12-2 16" stroke="#8a6a55" stroke-width="3" fill="none" opacity=".7"/>
<path d="M37 20c2-9 8-13 16-12c8 1 13 8 12 18c-1 10-5 18-12 22c-9-1-15-9-16-18z" fill="#c8928a"/>
<path d="M40 26c4-3 8-3 12-1M54 24c3-1 6-1 8 1" stroke="#8a5a55" stroke-width="2" fill="none" opacity=".6"/>
<path d="M26 14c4-12 16-17 28-14c9 2 15 9 15 20c-5-7-12-10-20-9c-6 1-10 5-12 12c-2 6-2 10-1 15c-6-5-11-14-10-24z" fill="#69493a"/>
<path d="M-4 60v-13c6-5 14-7 24-7l14 4c5 3 9 6 13 6c5-1 8-4 12-7c8 1 14 5 18 11v8z" fill="#2a2729"/>
<path d="M40 44c3 3 8 5 13 3" stroke="#b98378" stroke-width="4" fill="none" opacity=".55"/>
</g></svg>
<svg style="left:1162.200px;top:64.800px;overflow:hidden" width="117.800" height="68.400" viewBox="0 0 118 68">
<defs><filter id="b2" x="-20%" y="-20%" width="140%" height="140%"><feGaussianBlur stdDeviation="1.600"/></filter>
<linearGradient id="g2" x1="0" y1="0" x2="1" y2=".35"><stop offset="0" stop-color="#6a6a6c"/><stop offset=".45" stop-color="#8e8e90"/><stop offset="1" stop-color="#9a9a9b"/></linearGradient></defs>
<rect width="118" height="68" fill="url(#g2)"/>
<g filter="url(#b2)">
<path d="M8 15h34v26h-34z" fill="#bcbcbe"/>
<path d="M-3 14h9v40h-9z" fill="#a39c96"/>
<path d="M30 10h36v12h-36z" fill="#a5a5a7" opacity=".6"/>
<path d="M74 16h16v36h-16z" fill="#a6a6a8"/>
<path d="M92.500 -4h30v76h-37z" fill="#c0c0c0"/>
<path d="M64.500 22.500h11v25h-11z" fill="#474749"/>
<path d="M10 38h28v26h-28z" fill="#4a4a4c" opacity=".9"/>
<path d="M-3 56c10-3 20-6 30-12l10-2c6-1 12-2 18 0l12 2c10 3 18 12 24 28h-94z" fill="#161617"/>
<path d="M37.500 24c0-11 6-17 14.500-17s14 6 14 17c0 8-1 15-3 21h-23c-1.600-6-2.500-13-2.500-21z" fill="#1d1b1c"/>
<path d="M41.500 25c0-9 4-14 10.500-14s10.500 5 10.500 14c0 9-4 15.500-10.500 15.500s-10.500-6.500-10.500-15.500z" fill="#cdb4b6"/>
<path d="M46 38h12l3 8-9 12-8-12z" fill="#c3a9a8"/>
<path d="M-3 55h36v17h-36z" fill="#121213"/>
</g>
<rect x="8" y="35" width="29.600" height="24.800" rx="3" fill="#2c2c2c" opacity=".7"/>
<g transform="translate(22.800 47.400)" fill="none" stroke="#fff" stroke-width="1.150" stroke-linecap="round"><rect x="-2.100" y="-6" width="4.200" height="7.800" rx="2.100" fill="#fff" fill-opacity=".75"/><path d="M-4.100 0a4.100 4.100 0 0 0 8.200 0M0 4.200v2M-5.800-6.400l11.600 12.600"/></g>
</svg>
<svg style="left:1037.300px;top:144.600px;overflow:hidden" width="114" height="55.600" viewBox="0 0 115 56">
<defs><filter id="b3" x="-20%" y="-20%" width="140%" height="140%"><feGaussianBlur stdDeviation="1.700"/></filter></defs>
<rect width="115" height="56" fill="#aaa39d"/>
<g filter="url(#b3)">
<rect x="56" y="-4" width="64" height="12" fill="#c6c2bd"/>
<rect x="60" y="8" width="60" height="11.500" fill="#1f1b1a"/>
<path d="M-6 -4h62c5 8 8 18 8 28c5 1 7 8 6 15c-1 6-4 9-8 9l-4 12h-64z" fill="#c9a797"/>
<path d="M0 0h52v14h-52z" fill="#d3b4a4" opacity=".8"/>
<path d="M44 -4h18c4 8 5 18 4 30l-5-1c0-9-3-15-9-19c-3-2-6-3-10-4z" fill="#1d1918"/>
<path d="M2 -3h44v3.500h-44z" fill="#2a2422" opacity=".8"/>
<path d="M0 21c8-3 18-3 26-1M32 18c7-2.500 14-2.500 20 0" stroke="#6e4b45" stroke-width="3" fill="none" opacity=".65"/>
<path d="M0 30c6 4 14 4 20 0M28 30c6 5 16 5 24 0M52 27l10-2" stroke="#e3d2c6" stroke-width="1.400" fill="none" opacity=".75"/>
<path d="M16 40c2 4 6 6 12 5" stroke="#a57f70" stroke-width="2.500" fill="none" opacity=".7"/>
<ellipse cx="63.500" cy="42" rx="2.400" ry="4.200" fill="#f4f1f0"/>
</g></svg>
<svg style="left:1162.200px;top:138.200px;overflow:hidden" width="117.800" height="68.400" viewBox="0 0 118 68">
<defs><filter id="b4" x="-20%" y="-20%" width="140%" height="140%"><feGaussianBlur stdDeviation="1.300"/></filter></defs>
<rect width="118" height="68" fill="#d6d2c9"/>
<g filter="url(#b4)">
<rect x="-4" y="-4" width="24" height="76" fill="#c8c4ba"/>
<rect x="20" y="4" width="70" height="48" fill="#dedad2"/>
<rect x="-4" y="-3" width="62" height="5.500" fill="#3a3631"/>
<path d="M36 36.500h16v3.600h-16z" fill="#8c8479"/><path d="M47 38h3v6h-3z" fill="#8c8479"/>
<rect x="90.400" y="-2" width="4.200" height="56" fill="#1d1b1a"/>
<rect x="94" y="17" width="30" height="2.800" fill="#24211f"/><rect x="94" y="41.500" width="30" height="2.400" fill="#24211f"/>
<rect x="95.500" y="0" width="26" height="16" fill="#e2ded6"/><rect x="95.500" y="21" width="26" height="19.500" fill="#e2ded6"/><rect x="95.500" y="45" width="26" height="24" fill="#dcd8cf"/>
<path d="M28 70c2-9 8-15 18-17l12-4h20l12 4c10 2 14 8 16 17z" fill="#223c8c"/>
<path d="M60 47h16v7l-8 5-8-5z" fill="#a8816b"/>
<path d="M54.500 30c0-11 5-17 12.500-17s12.500 6 12.500 17c0 11-5 21-12.500 21s-12.500-10-12.500-21z" fill="#b38c76"/>
<path d="M53 30c-2-14 4-19.500 14-19.500s16 5.500 14 19.500c-2-7-6-10-14-10s-12 3-14 10z" fill="#1a1716"/>
<path d="M56 30.500h22" stroke="#3b2f2a" stroke-width="1.500"/>
</g>
<rect x="8.600" y="34.800" width="29.200" height="24.200" rx="3" fill="#3a3a3a" opacity=".72"/>
<g transform="translate(23.200 46.900)" fill="none" stroke="#fff" stroke-width="1.150" stroke-linecap="round"><rect x="-2.100" y="-6" width="4.200" height="7.800" rx="2.100" fill="#fff" fill-opacity=".75"/><path d="M-4.100 0a4.100 4.100 0 0 0 8.200 0M0 4.200v2M-5.800-6.400l11.600 12.600"/></g>
</svg>
<div style="left:1063.2px;top:247.6px;width:74.8px;height:74.8px;background:#cfdceb;border-radius:50%;"></div>
<span class="t" style='left:1081.8px;top:268.11px;font-size:32px;color:#17365d;transform:scaleX(0.900);-webkit-text-stroke:.75px #17365d;'>ЛБ</span>
<div style="left:1181px;top:247.6px;width:74.8px;height:74.8px;background:#fff;border-radius:50%;border:1px solid #dcdcdc;box-sizing:border-box;"></div>
<svg style="left:1200px;top:278px" width="36" height="14" viewBox="1200 278 36 14"><g fill="#1f1f1f"><circle cx="1210.300" cy="284.600" r="2"/><circle cx="1218.400" cy="284.600" r="2"/><circle cx="1226.500" cy="284.600" r="2"/></g></svg>
<span class="t" style='left:1052.2px;top:332.77px;font-size:13.5px;color:#4a4a4a;transform:scaleX(0.897);'>Лариса Ол...</span>
<span class="t" style='left:1169.6px;top:332.77px;font-size:13.5px;color:#4a4a4a;transform:scaleX(0.909);'>Переглянути в...</span>
<svg style="left:1132px;top:328px" width="20" height="22" viewBox="1132 328 20 22" fill="none" stroke="#444" stroke-width="1" stroke-linecap="round">
<rect x="1140.200" y="332.200" width="4" height="7.200" rx="2" fill="#666"/><path d="M1138.500 338a3.700 3.700 0 0 0 7.400 0M1142.200 341.800v2.400M1137.300 331.600l9.800 13"/></svg>
<div style="left:1031px;top:392.2px;width:249px;height:107.8px;background:#e7e7e7;"></div>
<svg style="left:1128.200px;top:431.700px" width="64" height="64" viewBox="-32 -32 64 64">
<defs><clipPath id="cav"><ellipse rx="30.400" ry="29.600"/></clipPath><filter id="b5"><feGaussianBlur stdDeviation=".8"/></filter>
<path id="ring" d="M-16.20 14.59A21.8 21.8 0 1 1 16.20 14.59"/></defs>
<g clip-path="url(#cav)">
<circle r="31" fill="#c4cdca"/>
<circle r="20.600" fill="none" stroke="#9fb5ae" stroke-width=".8"/>
<circle r="20" fill="#d3dbd8"/>
<g filter="url(#b5)">
<circle cx="-4" cy="-4" r="15" fill="#4f9480" opacity=".6"/>
<g stroke="#1f6b55" stroke-width="2.100" fill="none" stroke-linecap="round" opacity=".95">
<path d="M-6 16c0-6 .5-10 1-14M-5 2c-3-3-7-4-11-3M-5 2c2-4 2-8 0-12M-5 2c4-3 8-4 12-4M-9-1c-2-4-5-6-9-6M-5-5c-3-3-4-7-3-11M-3-4c3-3 4-7 3-11M-1 0c4-5 9-7 13-6M-13-6c-1-3 0-6 2-8M3-10c2-2 5-3 8-2M-16 4c-2-2-3-4-2-7M-11-12c1-2 3-4 6-4"/>
<path d="M-16 17c3-3 7-4 10-4s8 1 12 5M-14 13c-2 1-4 3-5 5M-6 14c-1 2-1 4 0 6"/>
</g>
<path d="M-22 34c1-12 6-19 15-21l6-2.500h9l6 2.500c9 2 14 9 15 21z" fill="#17191a"/>
<path d="M.500 5h8v8.500l-4 2.500-4-2.500z" fill="#b98c78"/>
<ellipse cx="4.500" cy="-.800" rx="6.300" ry="8.800" fill="#cfa08a"/>
<path d="M-2.600-1.500c-1.600-8 2-11.600 7.400-11.600s8.600 3.600 7 11.600c-.8-4.400-3-6.800-7-6.800s-6.400 2.400-7.400 6.800z" fill="#1d1817"/>
<path d="M3 14.500l1.500 2 1.500-2" stroke="#e8e8e8" stroke-width="1" fill="none"/>
</g>
<text font-family='"Liberation Serif", serif' font-weight="700" font-size="8.200" fill="#1e5c4a" stroke="#1e5c4a" stroke-width=".25" opacity=".98" textLength="100.4" lengthAdjust="spacingAndGlyphs"><textPath href="#ring" textLength="100.4" lengthAdjust="spacingAndGlyphs">NATIONAL TECHNICAL UNIVERSITY</textPath></text>
</g></svg>
</div></body></html>
